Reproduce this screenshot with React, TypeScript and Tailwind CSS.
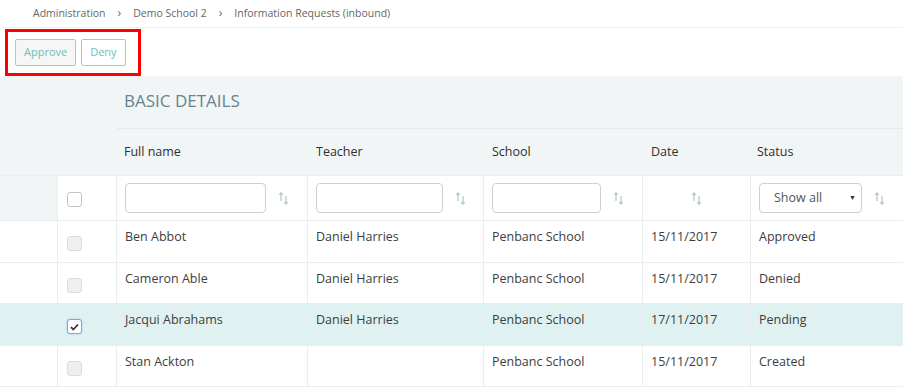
import React from "react";

type Row = {
  name: string;
  teacher: string;
  school: string;
  date: string;
  status: string;
  checked?: boolean;
};

const rows: Row[] = [
  { name: "Ben Abbot", teacher: "Daniel Harries", school: "Penbanc School", date: "15/11/2017", status: "Approved" },
  { name: "Cameron Able", teacher: "Daniel Harries", school: "Penbanc School", date: "15/11/2017", status: "Denied" },
  { name: "Jacqui Abrahams", teacher: "Daniel Harries", school: "Penbanc School", date: "17/11/2017", status: "Pending", checked: true },
  { name: "Stan Ackton", teacher: "", school: "Penbanc School", date: "15/11/2017", status: "Created" },
];

function SortIcon() {
  return (
    <svg width="11" height="15" viewBox="0 0 11 15" className="text-[#b9c8cf]">
      <path d="M3 2v8" fill="none" stroke="currentColor" strokeWidth="1.3" />
      <path d="M0.6 4L3 0.8L5.4 4z" fill="currentColor" />
      <path d="M8 5v8" fill="none" stroke="currentColor" strokeWidth="1.3" />
      <path d="M5.6 11L8 14.2L10.4 11z" fill="currentColor" />
    </svg>
  );
}

function Checkbox({ checked, disabled }: { checked?: boolean; disabled?: boolean }) {
  if (checked) {
    return (
      <div className="w-[15px] h-[15px] rounded-[3px] border border-[#7aa7e6] bg-white flex items-center justify-center shadow-[0_0_2px_#9cc0f0]">
        <svg width="9" height="8" viewBox="0 0 9 8">
          <path d="M1 4.2l2.3 2.3L8 1.5" fill="none" stroke="#333" strokeWidth="1.8" />
        </svg>
      </div>
    );
  }
  return (
    <div
      className={
        disabled
          ? "w-[15px] h-[15px] rounded-[3px] border border-[#dcdcdc] bg-[#efefef]"
          : "w-[15px] h-[15px] rounded-[3px] border border-[#c4c4c4] bg-white"
      }
    />
  );
}

const cols = "grid grid-cols-[58px_59px_191px_176px_159px_108px_1fr]";
const cell = "border-r border-[#e9eef0]";

function App() {
  return (
    <div className="w-[903px] h-[387px] overflow-hidden bg-white text-[#3d3d3d] font-['Open_Sans',sans-serif]">
      {/* Breadcrumb */}
      <div className="h-[28px] border-b border-[#eef1f2] flex items-center pl-[33px] text-[10.5px] text-[#666]">
        <span>Administration</span>
        <span className="mx-[12px] text-[12px] leading-none pb-[2px]">›</span>
        <span>Demo School 2</span>
        <span className="mx-[12px] text-[12px] leading-none pb-[2px]">›</span>
        <span>Information Requests (inbound)</span>
      </div>

      {/* Toolbar */}
      <div className="h-[48px] flex items-center pl-[5px]">
        <div className="h-[47px] w-[136px] border-[3px] border-[#ff0000] flex items-center gap-[5px] pl-[7px]">
          <button className="h-[27px] px-[8px] border border-[#8fd3cc] rounded-[2px] bg-[#f6f6f6] text-[11px] text-[#6cc0b8]">
            Approve
          </button>
          <button className="h-[27px] px-[8px] border border-[#8fd3cc] rounded-[2px] bg-white text-[11px] text-[#6cc0b8]">
            Deny
          </button>
        </div>
      </div>

      {/* Table */}
      <div className="bg-[#f2f5f6]">
        <div className={cols + " h-[53px]"}>
          <div className="col-span-2" />
          <div className="col-span-5 border-b border-[#e3e9ec] flex items-center pl-[7px] text-[17px] text-[#668393] pb-[2px]">
            BASIC DETAILS
          </div>
        </div>
        <div className={cols + " h-[47px] text-[12.5px] text-[#2f2f2f] border-b border-[#e9eef0]"}>
          <div className="col-span-2" />
          <div className="flex items-center pl-[7px]">Full name</div>
          <div className="flex items-center pl-[8px]">Teacher</div>
          <div className="flex items-center pl-[8px]">School</div>
          <div className="flex items-center pl-[8px]">Date</div>
          <div className="flex items-center pl-[6px]">Status</div>
        </div>
        <div className={cols + " h-[45px] border-b border-[#e9eef0]"}>
          <div className={cell} />
          <div className={cell + " bg-white flex items-center pl-[9px] pt-[2px]"}>
            <Checkbox />
          </div>
          <div className={cell + " bg-white flex items-center pl-[8px] gap-[12px]"}>
            <div className="w-[141px] h-[30px] border border-[#cfcfcf] rounded-[4px]" />
            <SortIcon />
          </div>
          <div className={cell + " bg-white flex items-center pl-[8px] gap-[12px]"}>
            <div className="w-[127px] h-[30px] border border-[#cfcfcf] rounded-[4px]" />
            <SortIcon />
          </div>
          <div className={cell + " bg-white flex items-center pl-[8px] gap-[12px]"}>
            <div className="w-[109px] h-[30px] border border-[#cfcfcf] rounded-[4px]" />
            <SortIcon />
          </div>
          <div className={cell + " bg-white flex items-center justify-center"}>
            <SortIcon />
          </div>
          <div className="bg-white flex items-center pl-[8px] gap-[12px]">
            <div className="w-[103px] h-[30px] border border-[#cfcfcf] rounded-[4px] flex items-center pl-[14px] pr-[5px] text-[12.5px] text-[#555]">
              <span className="flex-1">Show all</span>
              <span className="text-[7px] text-[#333]">▼</span>
            </div>
            <SortIcon />
          </div>
        </div>
        {rows.map((r) => (
          <div
            key={r.name}
            className={cols + " h-[41.5px] border-b border-[#e9eef0] text-[12.5px] " + (r.checked ? "bg-[#dff2f1]" : "bg-white")}
          >
            <div className={cell} />
            <div className={cell + " pl-[9px] pt-[15px]"}>
              <Checkbox checked={r.checked} disabled />
            </div>
            <div className={cell + " pl-[8px] pt-[7px]"}>{r.name}</div>
            <div className={cell + " pl-[8px] pt-[7px]"}>{r.teacher}</div>
            <div className={cell + " pl-[8px] pt-[7px]"}>{r.school}</div>
            <div className={cell + " pl-[8px] pt-[7px]"}>{r.date}</div>
            <div className="pl-[8px] pt-[7px]">{r.status}</div>
          </div>
        ))}
      </div>
    </div>
  );
}

export default App;
